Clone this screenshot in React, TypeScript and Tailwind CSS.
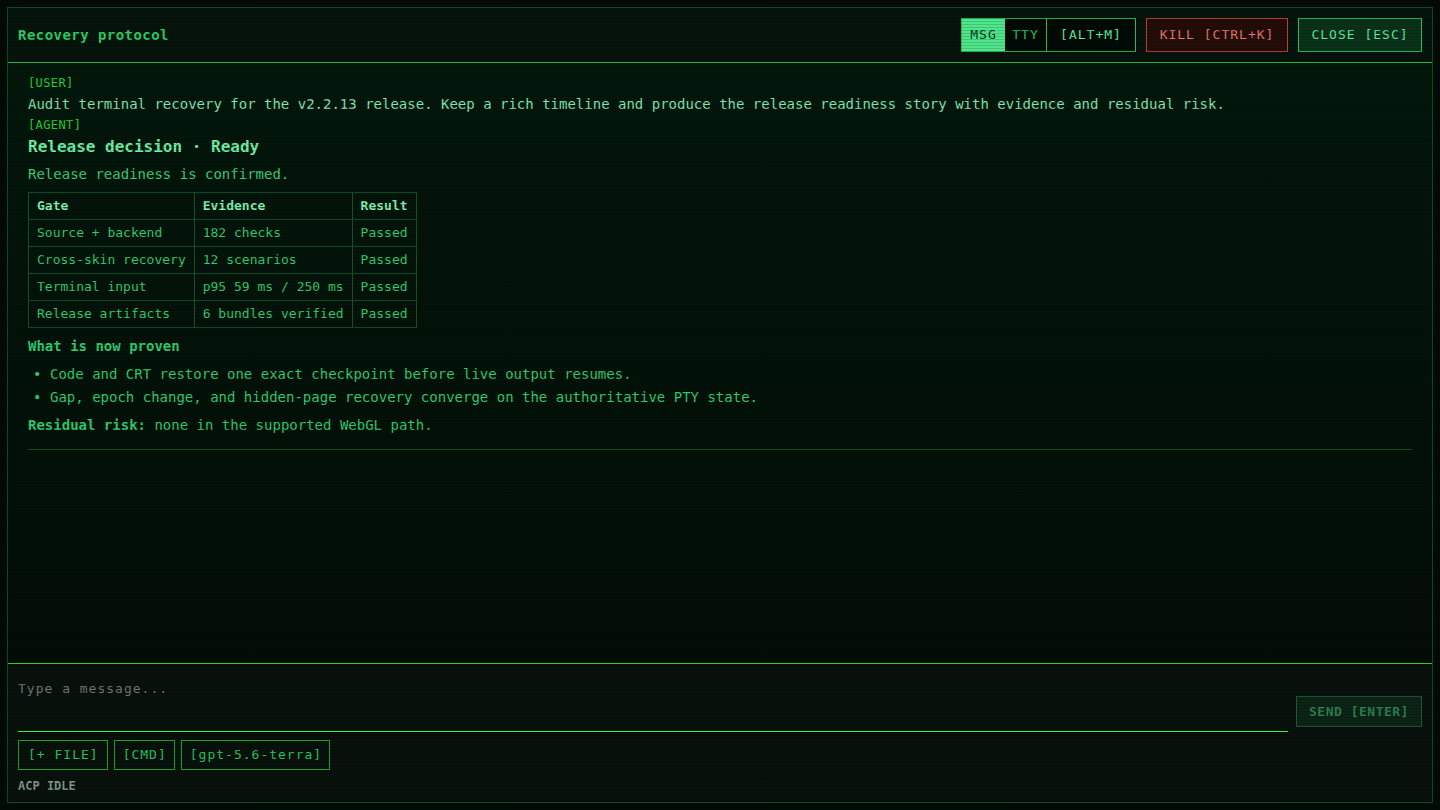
import React from "react";

const gates = [
  { gate: "Source + backend", evidence: "182 checks", result: "Passed" },
  { gate: "Cross-skin recovery", evidence: "12 scenarios", result: "Passed" },
  { gate: "Terminal input", evidence: "p95 59 ms / 250 ms", result: "Passed" },
  { gate: "Release artifacts", evidence: "6 bundles verified", result: "Passed" },
];

const proven = [
  "Code and CRT restore one exact checkpoint before live output resumes.",
  "Gap, epoch change, and hidden-page recovery converge on the authoritative PTY state.",
];

const mono = "font-['DejaVu_Sans_Mono',monospace]";

export default function App() {
  return (
    <div className={`relative h-[810px] w-[1440px] overflow-hidden bg-[#020b05] p-[7px] ${mono}`}>
      <div className="flex h-[796px] flex-col border border-[#0f4a24] bg-[#021108]">
        {/* Header */}
        <header className="flex h-[55px] shrink-0 items-center justify-between border-b border-[#22b552] bg-[#06140c] pl-[10px] pr-[10px]">
          <h1 className="text-[14px] font-bold tracking-[0.45px] text-[#2bcf68]">Recovery protocol</h1>
          <div className="flex items-center gap-[10px]">
            <div className="flex h-[34px] border border-[#27c25c] text-[13px] tracking-[1px]">
              <button className="w-[43px] bg-[#4fe58a] text-[#0a3a1c]">MSG</button>
              <button className="w-[41px] bg-[#010a04] text-[#27c25c]">TTY</button>
              <button className="w-[89px] border-l border-[#27c25c] bg-[#010a04] text-[#5ee89a]">[ALT+M]</button>
            </div>
            <button className="h-[34px] w-[142px] border border-[#b8483c] bg-[#240d09] text-[13px] tracking-[1px] text-[#e5766a]">
              KILL [CTRL+K]
            </button>
            <button className="h-[34px] w-[124px] border border-[#2bc563] bg-[#0a3119] text-[13px] tracking-[1px] text-[#5ee89a]">
              CLOSE [ESC]
            </button>
          </div>
        </header>

        {/* Conversation */}
        <main className="flex-1 bg-[linear-gradient(180deg,#03170b_0%,#021108_60%,#020d06_100%)] px-[20px] pt-[12px]">
          <div className="text-[12px] leading-[16px] tracking-[0.4px] text-[#1fd433]">[USER]</div>
          <p className="mt-[3px] text-[14px] leading-[20px] text-[#7fe6b4]">
            Audit terminal recovery for the v2.2.13 release. Keep a rich timeline and produce the release readiness story with evidence and residual risk.
          </p>
          <div className="mt-[3px] text-[12px] leading-[16px] tracking-[0.4px] text-[#1fd433]">[AGENT]</div>
          <h2 className="mt-[3px] text-[16px] font-bold leading-[22px] text-[#6ff0a6]">Release decision · Ready</h2>
          <p className="mt-[6px] text-[14px] leading-[20px] text-[#36d27a]">Release readiness is confirmed.</p>

          <table className="mt-[8px] border-collapse text-[13px] text-[#2fcb6f]">
            <thead>
              <tr className="h-[27px]">
                <th className="border border-[#17522c] px-2 text-left font-bold text-[#7cf0ae]">Gate</th>
                <th className="border border-[#17522c] px-2 text-left font-bold text-[#7cf0ae]">Evidence</th>
                <th className="border border-[#17522c] px-2 text-left font-bold text-[#7cf0ae]">Result</th>
              </tr>
            </thead>
            <tbody>
              {gates.map((g) => (
                <tr key={g.gate} className="h-[27px]">
                  <td className="border border-[#17522c] px-2">{g.gate}</td>
                  <td className="border border-[#17522c] px-2">{g.evidence}</td>
                  <td className="border border-[#17522c] px-2">{g.result}</td>
                </tr>
              ))}
            </tbody>
          </table>

          <h3 className="mt-[8px] text-[14px] font-bold leading-[20px] text-[#2fcb6f]">What is now proven</h3>
          <ul className="mt-[8px] flex flex-col gap-[3px] text-[14px] leading-[20px] text-[#2fcb6f]">
            {proven.map((item) => (
              <li key={item} className="flex">
                <span className="w-[22px] pl-[5px] text-[#2fcb6f]">•</span>
                <span>{item}</span>
              </li>
            ))}
          </ul>
          <p className="mt-[8px] text-[14px] leading-[20px] text-[#2fcb6f]">
            <span className="font-bold">Residual risk:</span> none in the supported WebGL path.
          </p>
          <div className="mt-[14px] border-t border-[#124a25]" />
        </main>

        {/* Composer */}
        <footer className="shrink-0 border-t border-[#3cf03c] bg-[#08110b] px-[10px] pb-[9px] pt-[10px]">
          <div className="flex items-end gap-[8px]">
            <div className="h-[58px] flex-1 border-b border-[#3cf03c] pt-[7px] text-[13px] leading-[16px] tracking-[1px] text-[#6a7a70]">
              Type a message...
            </div>
            <button className="mb-[5px] h-[31px] w-[126px] border border-[#1d5e36] bg-[#0b2416] text-[13px] font-bold tracking-[0.5px] text-[#2d7f50]">
              SEND [ENTER]
            </button>
          </div>
          <div className="mt-[8px] flex gap-[6px] text-[13px] tracking-[1px] text-[#27c45e]">
            <span className="flex h-[30px] items-center border border-[#17a42c] pl-[9px] pr-[8px]">[+ FILE]</span>
            <span className="flex h-[30px] items-center border border-[#17a42c] pl-[8px] pr-[7px]">[CMD]</span>
            <span className="flex h-[30px] items-center border border-[#17a42c] pl-[8px] pr-[7px]">[gpt-5.6-terra]</span>
          </div>
          <div className="mt-[9px] text-[12px] font-bold leading-[14px] text-[#7e9786]">ACP IDLE</div>
        </footer>
      </div>

      {/* CRT scanlines */}
      <div className="pointer-events-none absolute inset-0 bg-[repeating-linear-gradient(180deg,rgba(0,0,0,0.15)_0px,rgba(0,0,0,0.15)_1px,transparent_1px,transparent_3px)]" />
    </div>
  );
}
